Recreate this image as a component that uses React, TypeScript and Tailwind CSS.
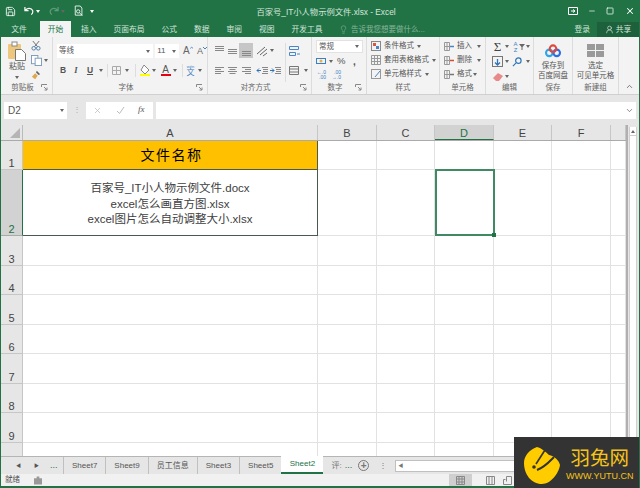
import { ChevronDown, ChevronUp, Lightbulb, Minus, Save, Square, UserRound, X } from 'lucide-react';

const columns = [
  { name: 'A', width: 'w-[295px]' },
  { name: 'B', width: 'w-[59px]' },
  { name: 'C', width: 'w-[58px]' },
  { name: 'D', width: 'w-[59px]' },
  { name: 'E', width: 'w-[58px]' },
  { name: 'F', width: 'w-[59px]' },
  { name: 'G', width: 'w-[15px]' },
];

const emptyRows = ['3', '4', '5', '6', '7', '8', '9', '10'];
const tabs = ['Sheet7', 'Sheet9', '员工信息', 'Sheet3', 'Sheet5'];

function Caret({ className = '' }: { className?: string }) {
  return <span className={`inline-block shrink-0 w-0 h-0 border-x-[2.5px] border-x-transparent border-t-[3px] border-t-[#666] ${className}`} />;
}

function Launcher() {
  return (
    <svg width="7" height="7" viewBox="0 0 7 7" className="absolute right-[4px] bottom-[3px]" fill="none" stroke="#888">
      <path d="M.5 3V.5H6M3 3l3 3M6 3.500V6H3.500" />
    </svg>
  );
}

function Group({ label, width, launcher, children }: { label: string; width: string; launcher?: boolean; children: React.ReactNode }) {
  return (
    <div className={`relative ${width} h-full shrink-0 flex flex-col border-r border-[#dcdcdc]`}>
      <div className="h-[45px] shrink-0">{children}</div>
      <div className={`h-[12px] text-center text-[7.5px] leading-[12px] text-[#666] whitespace-nowrap ${launcher ? 'pr-[8px]' : ''}`}>{label}</div>
      {launcher && <Launcher />}
    </div>
  );
}

function AlignIcon({ lines }: { lines: string }) {
  return (
    <svg width="13" height="12" viewBox="0 0 13 12" stroke="#888" fill="none">
      <path d={lines} />
    </svg>
  );
}

function SmallIcon({ children }: { children: React.ReactNode }) {
  return (
    <svg width="12" height="13" viewBox="0 0 12 13" fill="none" className="shrink-0">
      {children}
    </svg>
  );
}

function ClipboardGroup() {
  return (
    <Group label="剪贴板" width="w-[52px]" launcher>
      <div className="flex pl-[7px] pt-[4px]">
        <div className="w-[18px] flex flex-col items-center">
          <svg width="18" height="20" viewBox="0 0 18 20">
            <rect x="0" y="3" width="13" height="15" rx="1" fill="#edc77d" />
            <rect x="4" y="1" width="5" height="4" fill="#fff" stroke="#888" />
            <path d="M7.500 8.500h6l4 4v7h-10z" fill="#fff" stroke="#777" />
          </svg>
          <span className="text-[8px] leading-[10px] mt-px text-[#555] whitespace-nowrap">粘贴</span>
          <Caret className="mt-[4px]" />
        </div>
        <div className="flex flex-col gap-[4px] ml-[5px]">
          <svg width="10" height="10" viewBox="0 0 11 11" fill="none" stroke="#4a76a8">
            <path d="M2 0l5 6M9 0L4 6" stroke="#666" />
            <circle cx="3" cy="8" r="2" />
            <circle cx="8" cy="8" r="2" />
          </svg>
          <div className="flex items-center gap-[2px]">
            <svg width="11" height="11" viewBox="0 0 12 12" fill="#fff" stroke="#7a98b8">
              <rect x=".5" y=".5" width="7" height="9" />
              <rect x="4.500" y="3.500" width="7" height="8" />
            </svg>
            <Caret />
          </div>
          <svg width="10" height="10" viewBox="0 0 12 12">
            <path d="M7 1l4 4-2 1-3-3z" fill="#666" />
            <path d="M5 4l3 3-3 4-4-3z" fill="#e0a84e" />
          </svg>
        </div>
      </div>
    </Group>
  );
}

function RibbonSep() {
  return <span className="block w-px h-[13px] bg-[#ddd] shrink-0" />;
}

function FontGroup() {
  return (
    <Group label="字体" width="w-[155px]" launcher>
      <div className="pl-[4px] pt-[7px] flex flex-col gap-[3px]">
        <div className="flex items-center">
          <div className="w-[97px] h-[14px] bg-white flex items-center justify-between pl-[2px] pr-[3px] text-[7.5px] text-[#555]">
            等线
            <Caret />
          </div>
          <div className="ml-[2px] w-[24px] h-[14px] bg-white flex items-center justify-between pl-[2px] pr-[3px] text-[8px] text-[#555]">
            11
            <Caret />
          </div>
          <span className="ml-[4px] w-[10px] flex items-start text-[10px] leading-none text-[#666]">
            A
            <svg width="4" height="3" viewBox="0 0 4 3" fill="none" stroke="#3f7fc0"><path d="M0 3l2-2 2 2" /></svg>
          </span>
          <span className="ml-[4px] w-[10px] flex items-start text-[9px] leading-none text-[#666]">
            A
            <svg width="4" height="3" viewBox="0 0 4 3" fill="none" stroke="#3f7fc0"><path d="M0 0l2 2 2-2" /></svg>
          </span>
        </div>
        <div className="flex items-center h-[18px] text-[8.5px] text-[#555]">
          <span className="w-[12px] text-center font-bold">B</span>
          <span className="w-[14px] text-center font-bold italic font-['Liberation_Serif']">I</span>
          <span className="w-[14px] text-center font-bold underline">U</span>
          <Caret className="ml-[2px]" />
          <span className="ml-[4px]"><RibbonSep /></span>
          <svg width="9" height="9" viewBox="0 0 9 9" fill="none" stroke="#aaa" className="ml-[4px]">
            <path d="M.5.500h8v8h-8zM4.500 .5v8M.5 4.500h8" />
          </svg>
          <Caret className="ml-[4px]" />
          <span className="ml-[6px]"><RibbonSep /></span>
          <span className="ml-[3px] w-[11px] flex flex-col items-center">
            <svg width="10" height="9" viewBox="0 0 10 9">
              <path d="M4 0l5 5-4 4-4-4z" fill="#fff" stroke="#888" />
            </svg>
            <span className="w-[10px] h-[2px] bg-[#ffff00]" />
          </span>
          <Caret className="ml-[2px]" />
          <span className="ml-[4px] w-[11px] flex flex-col items-center leading-[9px] text-[10px]">
            A
            <span className="w-[10px] h-[2px] bg-[#e60012]" />
          </span>
          <Caret className="ml-[2px]" />
          <span className="ml-[5px]"><RibbonSep /></span>
          <span className="ml-[3px] w-[9px] flex flex-col items-center text-[#3f7fc0] whitespace-nowrap">
            <span className="text-[4px] leading-[5px]">wén</span>
            <span className="text-[8px] leading-[8px]">文</span>
          </span>
          <Caret className="ml-[3px]" />
        </div>
      </div>
    </Group>
  );
}

function AlignGroup() {
  return (
    <Group label="对齐方式" width="w-[104px]" launcher>
      <div className="pl-[5px] pt-[6px] flex">
        <div className="flex flex-col gap-[5px]">
          <div className="flex items-center h-[15px]">
            <AlignIcon lines="M2 1.500h9M2 3.500h9M2 5.500h9" />
            <AlignIcon lines="M2 4.500h9M2 6.500h9M2 8.500h9" />
            <span className="w-[14px] h-[15px] bg-[#c6c6c6] flex items-center justify-center"><AlignIcon lines="M2 6.500h9M2 8.500h9M2 10.500h9" /></span>
            <svg width="12" height="12" viewBox="0 0 12 12" stroke="#666" fill="none" className="ml-[3px]">
              <path d="M1 9l8-7M4 10l7-6M7 11l4-3" />
            </svg>
            <Caret className="ml-[2px]" />
          </div>
          <div className="flex items-center h-[15px]">
            <AlignIcon lines="M2 2.500h9M2 4.500h6M2 6.500h9M2 8.500h6" />
            <AlignIcon lines="M2 2.500h9M3.500 4.500h6M2 6.500h9M3.500 8.500h6" />
            <span className="w-[14px] flex justify-center"><AlignIcon lines="M2 2.500h9M5 4.500h6M2 6.500h9M5 8.500h6" /></span>
            <span className="ml-[3px]">
              <svg width="13" height="12" viewBox="0 0 13 12" fill="none">
                <path d="M6 2.500h6M7 4.500h5M7 6.500h5M6 8.500h6" stroke="#888" />
                <path d="M5 5.500H1M3 3.500l-2 2 2 2" stroke="#2f74b8" />
              </svg>
            </span>
            <svg width="13" height="12" viewBox="0 0 13 12" fill="none">
              <path d="M6 2.500h6M7 4.500h5M7 6.500h5M6 8.500h6" stroke="#888" />
              <path d="M1 5.500h4M3 3.500l2 2-2 2" stroke="#2f74b8" />
            </svg>
          </div>
        </div>
        <div className="ml-[3px] pl-[3px] border-l border-[#ddd] flex flex-col gap-[5px] h-[39px]">
          <div className="flex items-center h-[15px]">
            <svg width="11" height="11" viewBox="0 0 11 11" fill="none" stroke="#4a86c5"><path d="M.5 1.500h9v3h-9zM.5 7.500h6v3h-6zM8 9h3" /></svg>
          </div>
          <div className="flex items-center gap-[4px] h-[15px]">
            <svg width="11" height="11" viewBox="0 0 11 11" fill="none" stroke="#777"><path d="M.5 1.500h9v8h-9zM.5 4h9M.5 7h9" /></svg>
            <Caret />
          </div>
        </div>
      </div>
    </Group>
  );
}

function NumberGroup() {
  return (
    <Group label="数字" width="w-[55px]" launcher>
      <div className="pl-[4px] pt-[3px] flex flex-col">
        <div className="w-[47px] h-[13px] bg-white flex items-center justify-between pl-[2px] pr-[3px] text-[7.5px] text-[#555] border border-[#e2e2e2]">
          常规
          <Caret />
        </div>
        <div className="flex items-center h-[14px] mt-[1px] text-[10px] text-[#555]">
          <svg width="10" height="10" viewBox="0 0 10 10" fill="none" stroke="#3d7fc0"><rect x=".5" y="2.500" width="9" height="5" /><circle cx="5" cy="5" r="1.500" fill="#e8b04c" stroke="none" /></svg>
          <Caret className="ml-[3px]" />
          <span className="ml-[4px] w-[9px] text-[9.500px]">%</span>
          <span className="ml-[7px] font-bold leading-[9px]">,</span>
        </div>
        <div className="flex items-center gap-[5px] h-[14px] text-[5px] leading-[5px] text-[#3d7fc0]">
          <span className="w-[10px] text-right">←.0<br />.00</span>
          <span className="w-[10px] text-right">.00<br />→.0</span>
        </div>
      </div>
    </Group>
  );
}

function StyleRow({ label, children }: { label: string; children: React.ReactNode }) {
  return (
    <div className="flex items-center h-[14px] text-[7.5px] text-[#555] whitespace-nowrap">
      {children}
      <span className="ml-px">{label}</span>
      <Caret className="ml-[3px]" />
    </div>
  );
}

function StylesGroup() {
  return (
    <Group label="样式" width="w-[73px]">
      <div className="pl-[4px] pt-[2px] flex flex-col">
        <StyleRow label="条件格式">
          <SmallIcon><rect x=".5" y="1.500" width="9" height="9" stroke="#888" /><rect x="2" y="3" width="3" height="3" fill="#d9583b" /><rect x="5" y="6" width="3" height="3" fill="#4a86c5" /></SmallIcon>
        </StyleRow>
        <StyleRow label="套用表格格式">
          <SmallIcon><path d="M.5 1.500h9v9h-9zM.5 4.500h9M.5 7.500h9M3.500 1.500v9M6.500 1.500v9" stroke="#999" /></SmallIcon>
        </StyleRow>
        <StyleRow label="单元格样式">
          <SmallIcon><rect x=".5" y="1.500" width="9" height="9" stroke="#999" /><path d="M4 9l5-6" stroke="#4a86c5" /></SmallIcon>
        </StyleRow>
      </div>
    </Group>
  );
}

function CellsGroup() {
  const rows = [
    { label: '插入', color: '#4a86c5', gap: 'ml-[5px]' },
    { label: '删除', color: '#d9483b', gap: 'ml-[5px]' },
    { label: '格式', color: '#777', gap: 'ml-[1px]' },
  ];
  return (
    <Group label="单元格" width="w-[46px]">
      <div className="pl-[4px] pt-[2px] flex flex-col">
        {rows.map((row) => (
          <div key={row.label} className="flex items-center h-[14px] text-[7.5px] text-[#555] whitespace-nowrap">
            <SmallIcon>
              <path d="M.5 2.500h5v8h-5zM.5 6.500h5M3 2.500v8" stroke="#999" />
              <path d="M6 6.500h4" stroke={row.color} strokeWidth="1.500" />
            </SmallIcon>
            <span className="ml-px">{row.label}</span>
            <Caret className={row.gap} />
          </div>
        ))}
      </div>
    </Group>
  );
}

function EditGroup() {
  return (
    <Group label="编辑" width="w-[48px]">
      <div className="pl-[6px] pt-[2px] flex">
        <div className="flex flex-col">
          <div className="flex items-center h-[15px] gap-[2px]">
            <span className="w-[11px] text-[13px] leading-[14px] text-center text-[#444] font-['Liberation_Serif']">Σ</span>
            <Caret />
          </div>
          <div className="flex items-center h-[15px] gap-[2px]">
            <svg width="11" height="11" viewBox="0 0 11 11" fill="none">
              <rect x=".5" y=".5" width="10" height="10" stroke="#777" />
              <path d="M5.500 3v6M3 6.500l2.500 2.500L8 6.500" stroke="#2f74b8" strokeWidth="1.300" />
            </svg>
            <Caret />
          </div>
          <div className="flex items-center h-[15px] gap-[2px]">
            <svg width="11" height="10" viewBox="0 0 11 10">
              <path d="M6 1l5 3-4 5H4L1 6z" fill="#e88a8a" />
            </svg>
            <Caret />
          </div>
        </div>
        <div className="ml-[3px] flex flex-col">
          <div className="flex items-center h-[15px]">
            <span className="w-[7px] text-[6px] leading-[6px] text-[#3f7fc0] text-center">A<br />Z</span>
            <svg width="6" height="6" viewBox="0 0 6 6"><path d="M0 0h6L3.500 3v3h-1V3z" fill="#666" /></svg>
            <Caret className="ml-px" />
          </div>
          <div className="flex items-center h-[15px] gap-[4px]">
            <svg width="10" height="10" viewBox="0 0 11 11" fill="none" stroke="#2f74b8" strokeWidth="1.300">
              <circle cx="7" cy="4" r="3" />
              <path d="M4.500 6.500L1 10" />
            </svg>
            <Caret />
          </div>
        </div>
      </div>
    </Group>
  );
}

function SaveGroup() {
  return (
    <Group label="保存" width="w-[39px]">
      <div className="flex flex-col items-center pt-[7px] text-[7.5px] leading-[10px] text-[#555] whitespace-nowrap">
        <svg width="18" height="14" viewBox="0 0 18 15" fill="none" strokeWidth="2.200">
          <circle cx="5" cy="9.500" r="3.500" stroke="#2ea6e6" />
          <circle cx="13" cy="9.500" r="3.500" stroke="#2b6fe0" />
          <circle cx="9" cy="5" r="3.500" stroke="#e3473c" />
        </svg>
        <span className="mt-[3px]">保存到</span>
        <span>百度网盘</span>
      </div>
    </Group>
  );
}

function NewGroup() {
  return (
    <Group label="新建组" width="w-[46px]">
      <div className="flex flex-col items-center pt-[7px] text-[7.5px] leading-[10px] text-[#555] whitespace-nowrap">
        <span className="grid grid-cols-2 gap-px w-[17px] h-[13px]">
          <span className="bg-[#9a9a9a]" />
          <span className="bg-[#9a9a9a]" />
          <span className="bg-[#9a9a9a]" />
          <span className="bg-[#9a9a9a]" />
        </span>
        <span className="mt-[4px]">选定</span>
        <span>可见单元格</span>
      </div>
    </Group>
  );
}

function Ribbon() {
  return (
    <div className="h-[58px] shrink-0 flex bg-[#f3f3f3] border-b border-[#d0d0d0] text-[#555] overflow-hidden">
      <ClipboardGroup />
      <FontGroup />
      <AlignGroup />
      <NumberGroup />
      <StylesGroup />
      <CellsGroup />
      <EditGroup />
      <SaveGroup />
      <NewGroup />
      <div className="flex-1 flex items-end justify-center pb-[3px]">
        <ChevronUp size={9} strokeWidth={2} color="#555" />
      </div>
    </div>
  );
}

function TitleBar() {
  return (
    <div className="h-[22px] shrink-0 bg-[#217346] flex items-center text-white">
      <div className="flex-1 flex items-center">
        <Save size={11} strokeWidth={1.800} className="ml-[4px]" />
        <svg width="10" height="10" viewBox="0 0 11 11" fill="none" stroke="#fff" strokeWidth="1.300" className="ml-[8px]">
          <path d="M1 1v4h4M1.500 5C3 2 8 1.500 9.500 5c.6 2-.3 3.500-1.500 4.500" />
        </svg>
        <Caret className="ml-[2px] border-t-white" />
        <svg width="10" height="10" viewBox="0 0 11 11" fill="none" stroke="#5f9c7c" strokeWidth="1.300" className="ml-[9px]">
          <path d="M10 1v4H6M9.500 5C8 2 3 1.500 1.500 5c-.6 2 .3 3.500 1.500 4.500" />
        </svg>
        <Caret className="ml-[2px] border-t-[#5f9c7c]" />
        <svg width="10" height="12" viewBox="0 0 12 13" fill="none" stroke="#fff" className="ml-[9px]">
          <path d="M7.500.5h-6v11h8V3z" />
          <circle cx="5" cy="7" r="2" />
          <path d="M6.500 8.500L10 12" />
        </svg>
        <Caret className="ml-[6px] border-t-white" />
      </div>
      <div className="ml-[12px] text-[8.300px] pt-[2px] text-center text-[#d6e6dc] whitespace-nowrap">百家号_IT小人物示例文件.xlsx - Excel</div>
      <div className="flex-1 flex items-center justify-end">
        <svg width="10" height="8" viewBox="0 0 10 8" fill="none" stroke="#fff">
          <path d="M.5.500h9v7h-9zM3 4h4M5 2.500l2 1.500-2 1.500" />
        </svg>
        <Minus size={8} strokeWidth={2} className="ml-[10px]" />
        <Square size={8} strokeWidth={2.200} className="ml-[10px]" />
        <X size={10} strokeWidth={2.500} className="ml-[11px] mr-[4px]" />
      </div>
    </div>
  );
}

function TabBar() {
  const items = ['插入', '页面布局', '公式', '数据', '审阅', '视图', '开发工具'];
  return (
    <div className="h-[15px] shrink-0 bg-[#217346] flex text-[7.750px] leading-[15px] text-[#d3e4da]">
      <div className="w-[36px] text-center">文件</div>
      <div className="ml-[3px] w-[31px] h-[16px] -mt-px bg-[#f3f3f3] text-[#217346] text-center leading-[17px]">开始</div>
      <div className="ml-[1.500px] flex">
        {items.map((item) => (
          <div key={item} className="px-[8.500px] whitespace-nowrap">{item}</div>
        ))}
      </div>
      <div className="ml-[8px] flex items-center text-[7.500px] text-[#8ab59d] whitespace-nowrap">
        <Lightbulb size={9} strokeWidth={1.500} className="mr-[3px]" />
        告诉我您想要做什么...
      </div>
      <div className="ml-auto whitespace-nowrap">登录</div>
      <div className="ml-[7px] w-[42px] bg-[#1c613b] flex items-center justify-center whitespace-nowrap">
        <UserRound size={9} strokeWidth={1.800} className="mr-[2px]" />
        共享
      </div>
    </div>
  );
}

function FormulaBar() {
  return (
    <div className="h-[30px] shrink-0 flex items-center pl-[3px] pr-[3px]">
      <div className="w-[63px] h-[17px] bg-white flex items-center justify-between pl-[4px] pr-[3px] text-[10px] text-[#555]">
        D2
        <Caret />
      </div>
      <div className="w-[19px] flex justify-center text-[#aaa] text-[8px]">⋮</div>
      <div className="w-[67px] h-[17px] bg-white flex items-center text-[#bbb]">
        <X size={9} className="ml-[7px]" />
        <svg width="9" height="9" viewBox="0 0 9 9" fill="none" stroke="#bbb" className="ml-[14px]"><path d="M1 5l2.500 2.500L8 1" /></svg>
        <span className="ml-[13px] text-[9px] italic text-[#555] font-['Liberation_Serif']">fx</span>
      </div>
      <div className="ml-[3px] flex-1 h-[17px] bg-white flex items-center justify-end pr-[2px]">
        <ChevronDown size={9} strokeWidth={2} color="#666" />
      </div>
    </div>
  );
}

function ColumnHeader() {
  return (
    <div className="h-[16px] shrink-0 flex bg-[#e6e6e6] border-b border-[#aaa]">
      <div className="w-[22px] flex items-end justify-end border-r border-[#bbb] pr-[2px] pb-[2px]">
        <span className="w-0 h-0 border-l-[10px] border-l-transparent border-b-[10px] border-b-[#b5b5b5]" />
      </div>
      {columns.map((col) => (
        <div
          key={col.name}
          className={`${col.width} shrink-0 text-center text-[11px] leading-[17px] border-r border-[#c6c6c6] ${
            col.name === 'D' ? 'bg-[#d2d2d2] text-[#217346] border-b border-b-[#217346]' : 'text-[#444]'
          }`}
        >
          {col.name === 'G' ? '' : col.name}
        </div>
      ))}
    </div>
  );
}

function RowHead({ label, active }: { label: string; active?: boolean }) {
  return (
    <div
      className={`w-[22px] shrink-0 flex items-end justify-center text-[11px] leading-[11px] border-r border-b ${
        active ? 'bg-[#d2d2d2] text-[#217346] border-r-[#217346] border-b-[#aaa]' : 'bg-[#e6e6e6] text-[#444] border-r-[#c6c6c6] border-b-[#c6c6c6]'
      }`}
    >
      {label}
    </div>
  );
}

function EmptyCells() {
  return (
    <>
      {columns.slice(1).map((col) => (
        <div key={col.name} className={`${col.width} shrink-0 border-r border-b border-[#e2e2e2] bg-white`} />
      ))}
    </>
  );
}

function Grid() {
  return (
    <div className="flex-1 min-h-0 flex">
      <div className="w-[625px] shrink-0 flex flex-col overflow-hidden">
        <ColumnHeader />
        <div className="h-[29px] shrink-0 flex">
          <RowHead label="1" />
          <div className="w-[295px] shrink-0 bg-[#ffc000] border-b border-r border-[#4a5a50] flex items-center justify-center pl-[3px] text-[14px] tracking-[1.500px] text-black">
            文件名称
          </div>
          <EmptyCells />
        </div>
        <div className="relative h-[66px] shrink-0 flex">
          <RowHead label="2" active />
          <div className="w-[295px] shrink-0 bg-white border-b border-r border-[#4a5a50] flex flex-col items-center justify-center pt-[4px] text-[11.500px] leading-[15.500px] text-[#404040]">
            <span>百家号_IT小人物示例文件.docx</span>
            <span>excel怎么画直方图.xlsx</span>
            <span>excel图片怎么自动调整大小.xlsx</span>
          </div>
          <EmptyCells />
          <div className="absolute left-[434px] top-[-1px] w-[60px] h-[67px] border-2 border-[#3f8a63]">
            <span className="absolute -right-[3px] -bottom-[3px] w-[4px] h-[4px] bg-[#217346]" />
          </div>
        </div>
        {emptyRows.map((row) => (
          <div key={row} className="h-[29.500px] shrink-0 flex">
            <RowHead label={row === '10' ? '' : row} />
            <div className="w-[295px] shrink-0 border-r border-b border-[#e2e2e2] bg-white" />
            <EmptyCells />
          </div>
        ))}
      </div>
      <div className="flex-1 flex bg-[#e6e6e6] border-l-2 border-[#b0b0b0] pl-px pr-[2px] pt-[2px]">
        <div className="flex-1 bg-white border-x border-[#d0d0d0]">
          <div className="h-[9px] flex items-center justify-center border-b border-[#d0d0d0]">
            <span className="w-0 h-0 border-x-[2.5px] border-x-transparent border-b-[3px] border-b-[#666]" />
          </div>
        </div>
      </div>
    </div>
  );
}

function SheetTabs() {
  return (
    <div className="h-[18px] shrink-0 flex items-stretch bg-[#e6e6e6] border-t border-[#b5b5b5] text-[8px] text-[#555]">
      <div className="w-[62px] flex items-center text-[5px] shrink-0">
        <span className="ml-[15px]">◀</span>
        <span className="ml-[13px]">▶</span>
        <span className="ml-[11px] text-[9px] text-[#217346] leading-none">...</span>
      </div>
      {tabs.map((tab) => (
        <div key={tab} className="px-[8px] flex items-center whitespace-nowrap border-l border-[#c0c0c0]">
          {tab}
        </div>
      ))}
      <div className="w-[42px] shrink-0 flex items-center justify-center bg-white text-[#217346] border-b-2 border-[#217346] -mt-px">Sheet2</div>
      <div className="flex items-center pl-[8px] text-[#777] whitespace-nowrap">
        <span className="text-[8px]">评:</span>
        <span className="ml-[3px] text-[9px] text-[#217346]">...</span>
        <span className="ml-[6px] w-[11px] h-[11px] flex items-center justify-center border border-[#777] rounded-full text-[10px] leading-none font-bold">+</span>
        <span className="ml-[10px] text-[8px]">⋮</span>
        <div className="ml-[8px] w-[140px] h-[12px] flex items-center bg-white border border-[#c0c0c0] text-[5px] pl-[2px]">◀</div>
      </div>
    </div>
  );
}

function ViewIcon({ path }: { path: string }) {
  return (
    <svg width="9" height="9" viewBox="0 0 9 9" fill="none" stroke="#888">
      <path d={path} />
    </svg>
  );
}

function StatusBar() {
  return (
    <div className="h-[14px] shrink-0 flex items-center bg-[#f1f1f1] border-b-[2px] border-[#217346] text-[7.500px] text-[#555]">
      <span className="ml-[4px]">就绪</span>
      <svg width="8" height="9" viewBox="0 0 9 9" fill="#999" className="ml-[14px]">
        <path d="M0 2h9v7H0z" />
        <path d="M3 0h3v3H3z" />
      </svg>
      <div className="ml-[407px] w-[23px] h-full bg-[#cfcfcf] flex items-center justify-center">
        <ViewIcon path="M.5.500h8v8h-8zM3 .5v8M6 .5v8M.5 3h8M.5 6h8" />
      </div>
      <span className="ml-[14px]"><ViewIcon path="M.5.500h8v8h-8zM3 .5v8M6 .5v8" /></span>
      <span className="ml-[8px]"><ViewIcon path="M.5 8.500h8M.5 8.500v-5h2M8.500 8.500v-8h-5v5" /></span>
    </div>
  );
}

function Watermark() {
  return (
    <div className="absolute -right-px bottom-0 w-[126px] h-[51px] bg-[#333333] flex items-center">
      <svg width="36" height="37" viewBox="0 0 36 37" className="ml-[10px] mt-[5px] shrink-0">
        <path d="M13 0C5 3 0 9 0 16c0 11 7 21 18 21 9 0 17-11 18-19-1-5-6-9-11-10C21 4 17 1 13 0z" fill="#ffcc00" />
        <path d="M21 3L12 17" stroke="#333" strokeWidth="1.600" fill="none" />
        <path d="M30 10C26 14 21 20 13 23" stroke="#333" strokeWidth="2" fill="none" />
        <circle cx="10" cy="20" r="1.800" fill="#333" />
      </svg>
      <div className="ml-[6px] mt-[2px] flex flex-col items-center text-[#f6c417]">
        <span className="text-[19.500px] leading-[22px] whitespace-nowrap">羽兔网</span>
        <span className="text-[9px] leading-[10px] mt-[2px] whitespace-nowrap">WWW.YUTU.CN</span>
      </div>
    </div>
  );
}

export default function App() {
  return (
    <div className='relative w-[640px] h-[488px] overflow-hidden flex flex-col bg-[#e6e6e6] border-x border-[#217346] font-["Liberation_Sans","Noto_Sans_CJK_SC",sans-serif]'>
      <TitleBar />
      <TabBar />
      <Ribbon />
      <FormulaBar />
      <Grid />
      <SheetTabs />
      <StatusBar />
      <Watermark />
    </div>
  );
}
